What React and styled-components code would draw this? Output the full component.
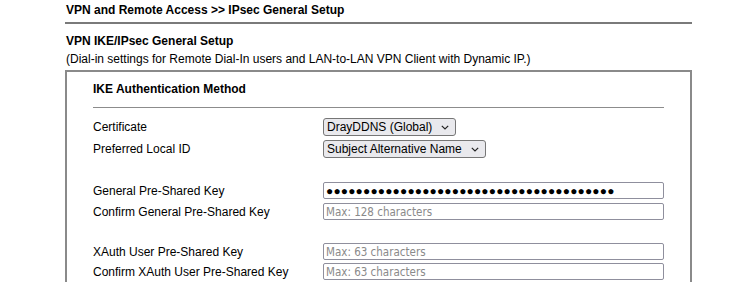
import React from "react";
import styled, { createGlobalStyle } from "styled-components";

const Global = createGlobalStyle`
  html, body { margin: 0; padding: 0; background: #fff; }
  body { font-family: "Liberation Sans", Arial, sans-serif; color: #000; }
`;

const Page = styled.div`
  padding: 3px 41px 0 65px;
  width: 627px;
`;

const PageTitle = styled.div`
  font-weight: bold;
  font-size: 12px;
  line-height: 15px;
  padding-left: 1px;
  height: 19px;
  border-bottom: 2px solid #7a7a7a;
`;

const SectionTitle = styled.div`
  font-weight: bold;
  font-size: 12px;
  line-height: 15px;
  margin-top: 10px;
  padding-left: 1px;
`;

const SectionNote = styled.div`
  font-size: 12px;
  line-height: 15px;
  margin-top: 3px;
  padding-left: 1px;
`;

const Box = styled.div`
  margin-top: 3px;
  border-top: 2px solid #8a8a8a;
  border-left: 2px solid #8a8a8a;
  border-right: 2px solid #8a8a8a;
  padding: 10px 26px 0 26px;
  height: 200px;
`;

const BoxTitle = styled.div`
  font-weight: bold;
  font-size: 12px;
  line-height: 15px;
  padding-bottom: 10px;
  border-bottom: 1px solid #8c8c8c;
  margin-bottom: 10px;
`;

const Rows = styled.div`
  display: flex;
  flex-direction: column;
`;

const Row = styled.div`
  display: grid;
  grid-template-columns: 230px 1fr;
  align-items: center;
  height: ${(p) => p.$h}px;
  margin-top: ${(p) => p.$gap || 0}px;
`;

const Label = styled.div`
  font-size: 12px;
  line-height: 14px;
`;

const SelectBox = styled.div`
  display: inline-flex;
  align-items: center;
  justify-self: start;
  height: 18px;
  box-sizing: border-box;
  border: 1px solid #767676;
  border-radius: 3px;
  background: #e9e9ed;
  padding: 0 6px 0 3px;
  font-family: "Liberation Sans", Arial, sans-serif;
  font-size: 12px;
  gap: 9px;
`;

const TextInput = styled.div`
  box-sizing: border-box;
  height: 17px;
  width: 341px;
  border: 1px solid #8f8f9d;
  border-radius: 2px;
  display: flex;
  align-items: center;
  padding-left: 2px;
  font-family: "DejaVu Sans Condensed", "DejaVu Sans", sans-serif;
  font-size: 11.5px;
  color: #8a8a8a;
  overflow: hidden;
  white-space: nowrap;
`;

const Dots = styled.span`
  font-family: "Liberation Sans", Arial, sans-serif;
  font-size: 12px;
  letter-spacing: 0.15px;
  color: #000;
`;

const Chevron = () => (
  <svg width="8" height="5" viewBox="0 0 8 5">
    <path d="M0.8 0.8 L4 4 L7.2 0.8" fill="none" stroke="#222" strokeWidth="1.2" />
  </svg>
);

export default function App() {
  return (
    <>
      <Global />
      <Page>
        <PageTitle>VPN and Remote Access &gt;&gt; IPsec General Setup</PageTitle>
        <SectionTitle>VPN IKE/IPsec General Setup</SectionTitle>
        <SectionNote>(Dial-in settings for Remote Dial-In users and LAN-to-LAN VPN Client with Dynamic IP.)</SectionNote>
        <Box>
          <BoxTitle>IKE Authentication Method</BoxTitle>
          <Rows>
            <Row $h={18}>
              <Label>Certificate</Label>
              <SelectBox>DrayDDNS (Global) <Chevron /></SelectBox>
            </Row>
            <Row $h={18} $gap={4}>
              <Label>Preferred Local ID</Label>
              <SelectBox>Subject Alternative Name <Chevron /></SelectBox>
            </Row>
            <Row $h={17} $gap={24}>
              <Label>General Pre-Shared Key</Label>
              <TextInput><Dots>{"\u25CF".repeat(39)}</Dots></TextInput>
            </Row>
            <Row $h={17} $gap={4}>
              <Label>Confirm General Pre-Shared Key</Label>
              <TextInput>Max: 128 characters</TextInput>
            </Row>
            <Row $h={17} $gap={23}>
              <Label>XAuth User Pre-Shared Key</Label>
              <TextInput>Max: 63 characters</TextInput>
            </Row>
            <Row $h={17} $gap={3}>
              <Label>Confirm XAuth User Pre-Shared Key</Label>
              <TextInput>Max: 63 characters</TextInput>
            </Row>
          </Rows>
        </Box>
      </Page>
    </>
  );
}
